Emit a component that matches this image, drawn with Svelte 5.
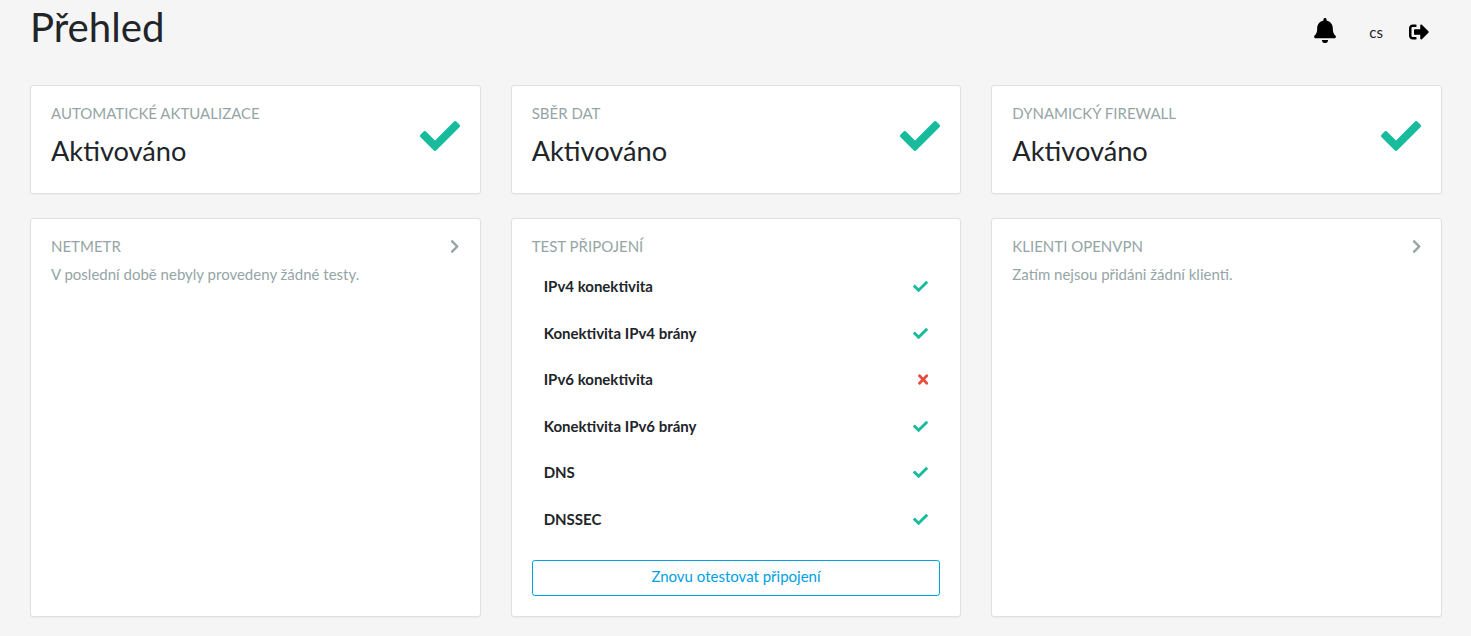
<script lang="ts">
  const statuses = ["Automatické aktualizace", "Sběr dat", "Dynamický firewall"];
  const tests = [
    { name: "IPv4 konektivita", ok: true },
    { name: "Konektivita IPv4 brány", ok: true },
    { name: "IPv6 konektivita", ok: false },
    { name: "Konektivita IPv6 brány", ok: true },
    { name: "DNS", ok: true },
    { name: "DNSSEC", ok: true },
  ];
  const check =
    "M173.898 439.404l-166.4-166.4c-9.997-9.997-9.997-26.206 0-36.204l36.203-36.204c9.997-9.998 26.207-9.998 36.204 0L192 312.69 432.095 72.596c9.997-9.997 26.207-9.997 36.204 0l36.203 36.204c9.997 9.997 9.997 26.206 0 36.204l-294.4 294.401c-9.998 9.997-26.207 9.997-36.204-.001z";
  const chevron =
    "M285.476 272.971L91.132 467.314c-9.373 9.373-24.569 9.373-33.941 0l-22.667-22.667c-9.357-9.357-9.375-24.522-.04-33.901L188.505 256 34.484 101.255c-9.335-9.379-9.317-24.544.04-33.901l22.667-22.667c9.373-9.373 24.569-9.373 33.941 0L285.475 239.03c9.373 9.372 9.373 24.568.001 33.941z";
</script>

<main>
  <header>
    <h1>Přehled</h1>
    <nav>
      <svg class="bell" viewBox="0 0 448 512" aria-label="Upozornění">
        <path d="M224 512c35.32 0 63.97-28.65 63.97-64H160.03c0 35.35 28.65 64 63.97 64zm215.39-149.71c-19.32-20.76-55.47-51.99-55.47-154.29 0-77.7-54.48-139.9-127.94-155.16V32c0-17.67-14.32-32-31.98-32s-31.98 14.33-31.98 32v20.84C118.56 68.1 64.08 130.3 64.08 208c0 102.3-36.15 133.53-55.47 154.29-6 6.45-8.66 14.16-8.61 21.71.11 16.4 12.98 32 32.1 32h383.8c19.12 0 32-15.6 32.1-32 .05-7.55-2.61-15.27-8.61-21.71z" />
      </svg>
      <span class="lang">cs</span>
      <svg class="logout" viewBox="0 0 512 512" aria-label="Odhlásit">
        <path d="M497 273L329 441c-15 15-41 4.5-41-17v-96H152c-13.3 0-24-10.7-24-24v-96c0-13.3 10.7-24 24-24h136V88c0-21.4 25.9-32 41-17l168 168c9.3 9.4 9.3 24.6 0 34zM192 436v-40c0-6.6-5.4-12-12-12H96c-17.7 0-32-14.3-32-32V160c0-17.7 14.3-32 32-32h84c6.6 0 12-5.4 12-12V76c0-6.6-5.4-12-12-12H96c-53 0-96 43-96 96v192c0 53 43 96 96 96h84c6.6 0 12-5.4 12-12z" />
      </svg>
    </nav>
  </header>

  <section class="status-row">
    {#each statuses as title}
      <div class="card status">
        <div>
          <h2>{title}</h2>
          <p class="value">Aktivováno</p>
        </div>
        <svg class="big-check" viewBox="0 0 512 512"><path d={check} /></svg>
      </div>
    {/each}
  </section>

  <section class="detail-row">
    <div class="card detail">
      <div class="head">
        <h2>Netmetr</h2>
        <svg class="chevron" viewBox="0 0 320 512"><path d={chevron} /></svg>
      </div>
      <p class="muted">V poslední době nebyly provedeny žádné testy.</p>
    </div>

    <div class="card detail">
      <div class="head">
        <h2>Test připojení</h2>
      </div>
      <ul>
        {#each tests as test}
          <li>
            <span>{test.name}</span>
            {#if test.ok}
              <svg class="small-check" viewBox="0 0 512 512"><path d={check} /></svg>
            {:else}
              <svg class="cross" viewBox="0 0 352 512">
                <path d="M242.72 256l100.07-100.07c12.28-12.28 12.28-32.19 0-44.48l-22.24-22.24c-12.28-12.28-32.19-12.28-44.48 0L176 189.28 75.93 89.21c-12.28-12.28-32.19-12.28-44.48 0L9.21 111.45c-12.28 12.28-12.28 32.19 0 44.48L109.28 256 9.21 356.07c-12.28 12.28-12.28 32.19 0 44.48l22.24 22.24c12.28 12.28 32.2 12.28 44.48 0L176 322.72l100.07 100.07c12.28 12.28 32.2 12.28 44.48 0l22.24-22.24c12.28-12.28 12.28-32.19 0-44.48L242.72 256z" />
              </svg>
            {/if}
          </li>
        {/each}
      </ul>
      <button>Znovu otestovat připojení</button>
    </div>

    <div class="card detail">
      <div class="head">
        <h2>Klienti OpenVPN</h2>
        <svg class="chevron" viewBox="0 0 320 512"><path d={chevron} /></svg>
      </div>
      <p class="muted">Zatím nejsou přidáni žádní klienti.</p>
    </div>
  </section>
</main>

<style>
  :global(body) {
    background: #f5f5f5;
    color: #212529;
    font-family: Lato, "Open Sans", sans-serif;
    font-size: 15px;
  }

  main {
    height: 636px;
    padding: 0 29px 0 30px;
    box-sizing: border-box;
    overflow: hidden;
  }

  header {
    display: flex;
    justify-content: space-between;
    height: 85px;
  }

  h1 {
    margin: 3px 0 0;
    font-size: 40.2px;
    line-height: 48px;
    font-weight: 400;
    height: 48px;
  }

  nav {
    display: flex;
    align-items: center;
    height: 62px;
    padding-right: 13px;

    svg {
      fill: #000;
    }

    .bell {
      width: 22px;
      height: 25px;
      margin-bottom: 2px;
    }

    .lang {
      margin-left: 33px;
      color: #212529;
      padding-top: 1px;
    }

    .logout {
      width: 20px;
      height: 20px;
      margin-left: 26px;
      margin-top: 2px;
    }
  }

  h2 {
    margin: 0;
    font-size: 15px;
    line-height: 21px;
    font-weight: 400;
    color: #95a5a6;
    text-transform: uppercase;
  }

  p {
    margin: 0;
  }

  .status-row,
  .detail-row {
    display: grid;
    grid-template-columns: repeat(3, 1fr);
    gap: 30px;
  }

  .detail-row {
    margin-top: 24px;
  }

  .card {
    box-sizing: border-box;
    background: #fff;
    border: 1px solid #e0e0e0;
    border-radius: 3px;
    box-shadow: 0 1px 2px rgba(0, 0, 0, 0.04);
  }

  .status {
    display: flex;
    justify-content: space-between;
    height: 109px;
    padding: 17px 20px 0;
  }

  .value {
    margin-top: 10px;
    font-size: 27.2px;
    line-height: 33px;
  }

  .big-check {
    width: 40px;
    height: 40px;
    margin-top: 13px;
    fill: #18bc9c;
  }

  .detail {
    display: flex;
    flex-direction: column;
    height: 399px;
    padding: 17px 20px 20px;
  }

  .head {
    display: flex;
    justify-content: space-between;
    align-items: center;
  }

  .chevron {
    width: 9.4px;
    height: 15px;
    fill: #95a5a6;
  }

  .muted {
    margin-top: 7px;
    line-height: 21px;
    color: #95a5a6;
  }

  ul {
    list-style: none;
    margin: 6px 0 0;
    padding: 0;
    flex: 1;
  }

  li {
    display: flex;
    justify-content: space-between;
    align-items: center;
    height: 46.5px;
    padding: 0 12px;
    font-weight: 700;
    color: #212529;
  }

  .small-check {
    width: 15px;
    height: 15px;
    margin-top: 1px;
    fill: #18bc9c;
  }

  .cross {
    width: 10.3px;
    height: 15px;
    fill: #e74c3c;
  }

  button {
    height: 36px;
    flex: none;
    background: transparent;
    border: 1px solid #00a0e3;
    border-radius: 3px;
    color: #00a0e3;
    font: inherit;
    padding: 0 0 5px;
  }
</style>
